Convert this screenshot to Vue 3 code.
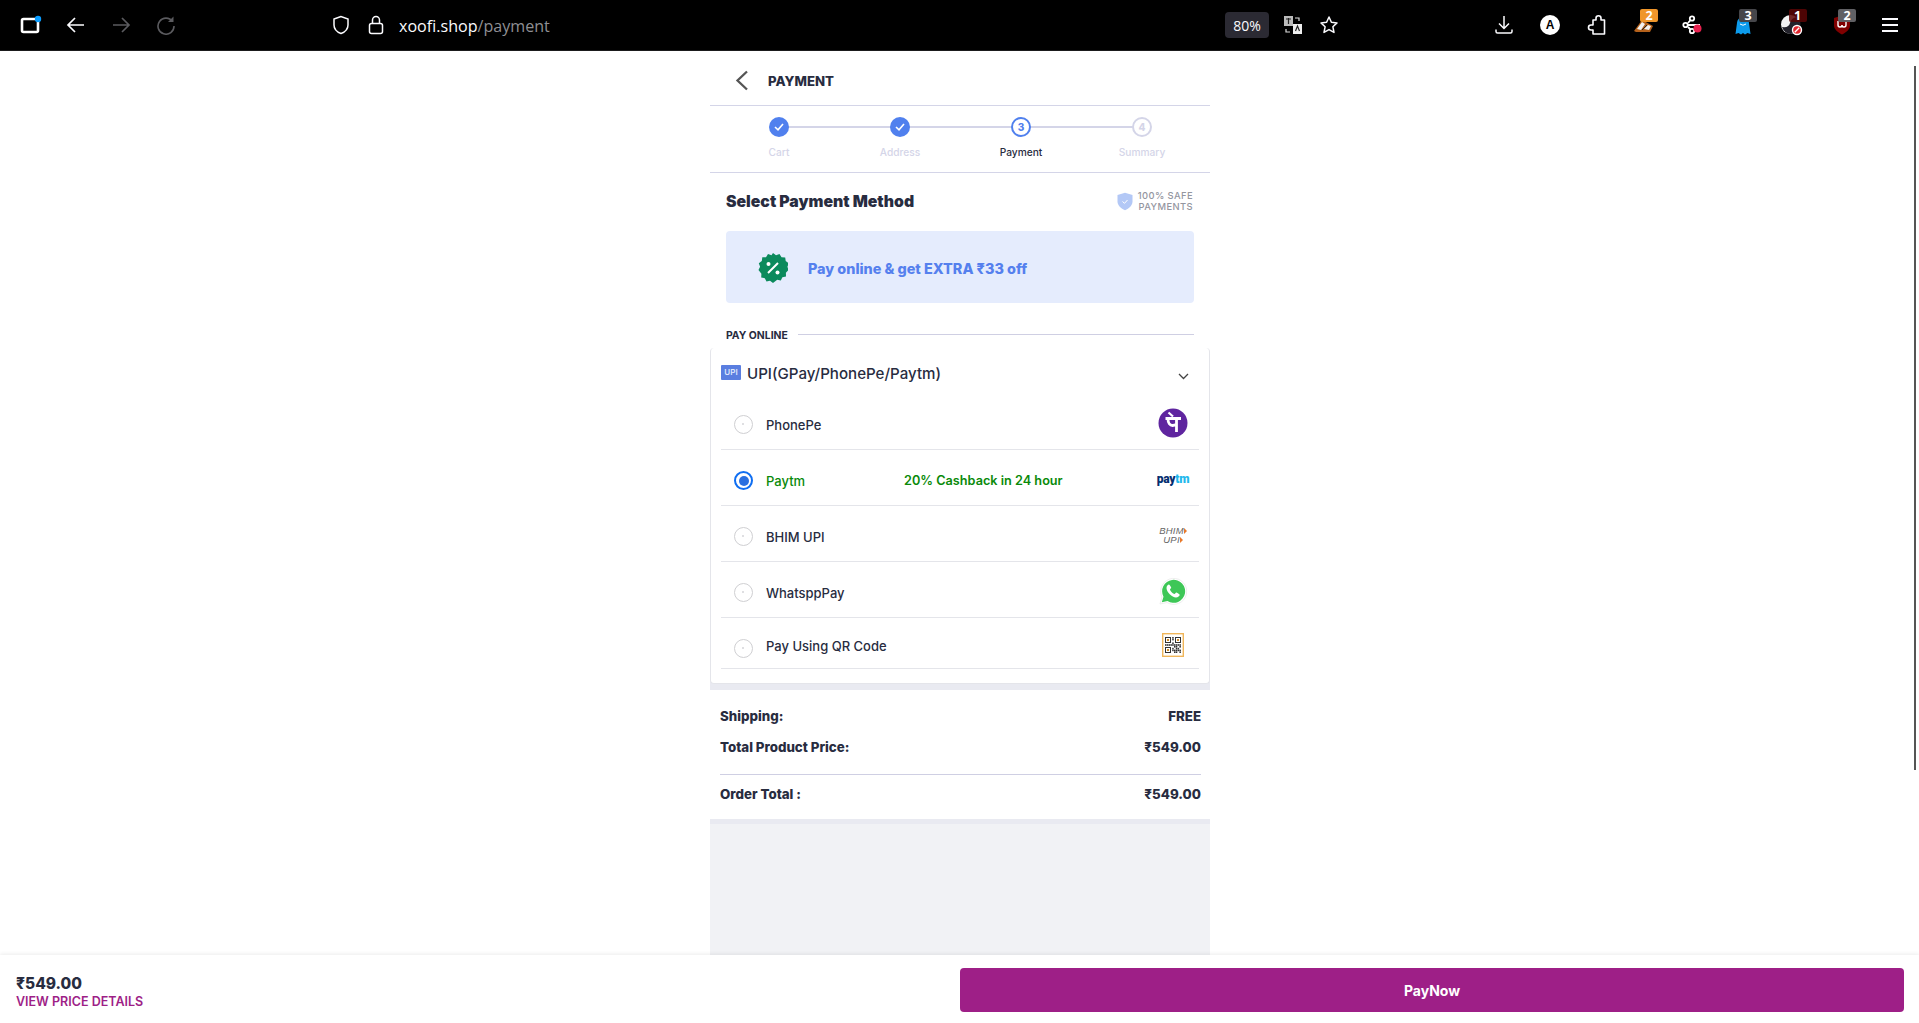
<script setup>
const steps = [
  { label: 'Cart', state: 'done' },
  { label: 'Address', state: 'done' },
  { label: 'Payment', state: 'current', n: 3 },
  { label: 'Summary', state: 'todo', n: 4 }
]
const methods = [
  { name: 'PhonePe', logo: 'phonepe' },
  { name: 'Paytm', logo: 'paytm', selected: true, note: '20% Cashback in 24 hour' },
  { name: 'BHIM UPI', logo: 'bhim' },
  { name: 'WhatsppPay', logo: 'whatsapp' },
  { name: 'Pay Using QR Code', logo: 'qr', short: true }
]
const finders = [[3, 4], [13, 4], [3, 14]]
const qrCells = []
for (let y = 0; y < 9; y++) for (let x = 0; x < 9; x++) {
  const inFinder = (x < 4 && y < 4) || (x > 4 && y < 4) || (x < 4 && y > 4)
  if (!inFinder && (x * 5 + y * 3 + x * y) % 3 !== 1) qrCells.push({ x, y })
}
</script>

<template>
  <div class="page">
    <header class="browser">
      <div class="nav">
        <span class="slot tabs">
          <svg width="22" height="20" viewBox="0 0 22 20"><rect x="2" y="4" width="16" height="13" rx="1.5" fill="none" stroke="#fff" stroke-width="2.6"/><circle cx="18" cy="4" r="3.2" fill="#0a9dff"/></svg>
        </span>
        <span class="slot"><svg width="20" height="18" viewBox="0 0 20 18" fill="none" stroke="#fbfbfe" stroke-width="1.7"><path d="M18 9H2M9 2 2 9l7 7"/></svg></span>
        <span class="slot"><svg width="20" height="18" viewBox="0 0 20 18" fill="none" stroke="#5b5b5f" stroke-width="1.7"><path d="M2 9h16M11 2l7 7-7 7"/></svg></span>
        <span class="slot"><svg width="20" height="20" viewBox="0 0 20 20" fill="none" stroke="#5b5b5f" stroke-width="1.6"><path d="M16.5 6.500A8 8 0 1 0 18 11"/><path d="M17.500 1.500v5.500H12" fill="#5b5b5f" stroke="none"/></svg></span>
      </div>
      <div class="address">
        <svg class="shield" width="18" height="20" viewBox="0 0 18 20" fill="none" stroke="#fbfbfe" stroke-width="1.5"><path d="M9 1.500 2 4v6c0 4 3 7 7 8.500 4-1.500 7-4.500 7-8.500V4z"/></svg>
        <svg class="lock" width="16" height="20" viewBox="0 0 16 20" fill="none" stroke="#fbfbfe" stroke-width="1.5"><rect x="1.500" y="8.500" width="13" height="10" rx="2"/><path d="M4.500 8.500V5a3.500 3.500 0 0 1 7 0v3.500"/></svg>
        <span class="url">xoofi.shop<span class="url-path">/payment</span></span>
      </div>
      <div class="page-actions">
        <span class="zoom-chip">80%</span>
        <span class="slot small">
          <svg width="20" height="20" viewBox="0 0 20 20"><rect x="1" y="1" width="9" height="10" fill="#bbb"/><rect x="10" y="9" width="9" height="10" fill="#eee"/><path d="M12 3h4v3M3 14v3h4" fill="none" stroke="#ddd" stroke-width="1.200"/><path d="M3 4h5M5.500 3v6M12.500 16l2-5 2 5" fill="none" stroke="#222" stroke-width="1.200"/></svg>
        </span>
        <span class="slot small">
          <svg width="20" height="20" viewBox="0 0 20 20" fill="none" stroke="#fbfbfe" stroke-width="1.500" stroke-linejoin="round"><path d="m10 2 2.400 5.200 5.600.7-4.100 3.900 1.100 5.600L10 14.600l-5 2.800 1.100-5.600L2 7.900l5.600-.7z"/></svg>
        </span>
      </div>
      <div class="tools">
        <span class="tool near"><svg width="20" height="20" viewBox="0 0 20 20" fill="none" stroke="#fbfbfe" stroke-width="1.500"><path d="M10 1v12M5 8.500l5 5 5-5M2 14.500v2a1.500 1.500 0 0 0 1.500 1.500h13a1.500 1.500 0 0 0 1.500-1.500v-2"/></svg></span>
        <span class="tool near"><span class="avatar">A</span></span>
        <span class="tool near"><svg width="19" height="20" viewBox="0 0 19 20" fill="none" stroke="#fbfbfe" stroke-width="1.600" stroke-linejoin="round"><path d="M6 5h3V3.300a2.500 2.500 0 0 1 5 0V5h3.500v14H6v-4H4a2.500 2.500 0 0 1 0-5h2z"/></svg></span>
        <span class="tool">
          <svg width="22" height="18" viewBox="0 0 22 18"><path d="M1 15 9 4l11 6-3 6H3z" fill="#b4611b"/><path d="M4 13l5-7 3 2-4 6zM11 13l4-4 3 1-2 4z" fill="#f2f2f2"/><path d="M9 14l5-5" stroke="#222" stroke-width="1"/></svg>
          <i class="badge orange">2</i>
        </span>
        <span class="tool">
          <svg width="22" height="20" viewBox="0 0 22 20" fill="none" stroke="#fff" stroke-width="1.800"><circle cx="10" cy="3.500" r="2.200"/><circle cx="3.500" cy="10" r="2.200"/><circle cx="10" cy="16" r="2.200"/><path d="M6 10h12M8.500 5 6 8M8.500 14.500 6 12"/><circle cx="15.500" cy="13.500" r="4" fill="#e8214f" stroke="none"/></svg>
        </span>
        <span class="tool">
          <svg width="16" height="20" viewBox="0 0 16 20"><path d="M2 8a6 6 0 0 1 12 0l1.500 11-3-1-2.500 1.500L8 18l-2 1.500L3.500 18l-3 1z" fill="#0c9bec"/><path d="M5 9q3 2.500 6 0" fill="none" stroke="#fff" stroke-width="1"/></svg>
          <i class="badge grey">3</i>
        </span>
        <span class="tool">
          <svg width="24" height="22" viewBox="0 0 24 22"><circle cx="10.500" cy="10.500" r="9.500" fill="#f2f2f2"/><path d="M2 13Q9 14 10 9t7-6q4 3 3.500 9-2 7-10 8-6 0-8.500-7z" fill="#23222b"/><circle cx="17" cy="16" r="5.200" fill="#fff"/><circle cx="17" cy="16" r="3.800" fill="#e0262d"/><path d="m14.800 18.200 4.400-4.400" stroke="#fff" stroke-width="1.300"/></svg>
          <i class="badge maroon">1</i>
        </span>
        <span class="tool">
          <svg width="18" height="20" viewBox="0 0 18 20"><path d="M9 .5 1 3v7.500c0 4 4 7 8 9 4-2 8-5 8-9V3z" fill="#800000"/><path d="M5 6v4a2 2 0 0 0 4 0 2 2 0 0 0 4 0V6" fill="none" stroke="#fff" stroke-width="1.400"/></svg>
          <i class="badge light">2</i>
        </span>
        <span class="tool menu"><span></span><span></span><span></span></span>
      </div>
    </header>

    <main class="viewport">
      <section class="column">
        <div class="title-bar">
          <svg width="14" height="22" viewBox="0 0 14 22" fill="none" stroke="#555" stroke-width="2.300"><path d="M12 1.500 2.500 10.500l9.500 9"/></svg>
          <h1>PAYMENT</h1>
        </div>

        <ol class="stepper">
          <li v-for="(s, i) in steps" :key="s.label" class="step" :class="s.state">
            <span class="dot">
              <svg v-if="s.state === 'done'" width="10" height="8" viewBox="0 0 10 8" fill="none" stroke="#fff" stroke-width="1.600"><path d="m1 4 3 2.800L9 1"/></svg>
              <template v-else>{{ s.n }}</template>
            </span>
            <span class="step-label">{{ s.label }}</span>
            <span v-if="i < steps.length - 1" class="connector"></span>
          </li>
        </ol>

        <div class="pay-section">
          <div class="method-head">
            <h2>Select Payment Method</h2>
            <div class="safe">
              <svg width="16" height="19" viewBox="0 0 16 19"><path d="M8 .8 .5 3v6.500c0 4 3.500 7 7.500 8.700 4-1.700 7.500-4.700 7.500-8.700V3z" fill="#b3c8f6"/><path d="m5.500 9.500 2 1.800 3-3.300" fill="none" stroke="#fff" stroke-width="1"/></svg>
              <span>100% SAFE<br />PAYMENTS</span>
            </div>
          </div>

          <div class="offer">
            <svg width="30" height="30" viewBox="0 0 30 30">
              <path fill="#0b8a5c" d="M15 0l3 2.200 3.500-1.100 2 3.100 3.700.2.500 3.700 3 2.200-1.300 3.500L30.500 17l-2.600 2.700.1 3.700-3.600.9-1.600 3.300-3.600-.8L15 30l-3-2.200-3.500.8-1.700-3.300-3.600-.9.200-3.700L.5 17l1.600-3.300L.8 10.200l3-2.200.5-3.700L8 4.200l2-3.100 3.500 1.100z"/>
              <path d="m10 20 10-10" stroke="#fff" stroke-width="2"/>
              <circle cx="10.500" cy="11" r="2" fill="#fff"/><circle cx="19.500" cy="19.500" r="2" fill="#fff"/>
            </svg>
            <span>Pay online &amp; get EXTRA ₹33 off</span>
          </div>

          <div class="section-label"><span>PAY ONLINE</span><i></i></div>

          <div class="card">
            <div class="card-head">
              <span class="upi-tag">UPI</span>
              <span class="upi-title">UPI(GPay/PhonePe/Paytm)</span>
              <svg class="chevron" width="11" height="7" viewBox="0 0 11 7" fill="none" stroke="#444" stroke-width="1.300"><path d="m1 1 4.500 4.500L10 1"/></svg>
            </div>
            <div v-for="m in methods" :key="m.name" class="method" :class="{ selected: m.selected, short: m.short }">
              <span class="radio"></span>
              <span class="method-name">{{ m.name }}</span>
              <span v-if="m.note" class="method-note">{{ m.note }}</span>
              <span class="logo">
                <svg v-if="m.logo === 'phonepe'" width="30" height="30" viewBox="0 0 30 30">
                  <circle cx="15" cy="15" r="14.500" fill="#5f259f"/>
                  <path d="M7.500 10.500h15.500M18.500 10.500V24M10 11c0 4 2 6.500 4.500 6.500 2 0 4-1.300 4-1.300" fill="none" stroke="#fff" stroke-width="2.800"/>
                  <path d="m10.500 4.500 4.500 4" stroke="#fff" stroke-width="2.200"/>
                </svg>
                <span v-else-if="m.logo === 'paytm'" class="paytm"><b>pay</b><em>tm</em></span>
                <span v-else-if="m.logo === 'bhim'" class="bhim"><span>BHIM<i></i></span><span>UPI<i></i></span></span>
                <svg v-else-if="m.logo === 'whatsapp'" width="28" height="28" viewBox="0 0 28 28">
                  <path d="M1 27l2-7A13 13 0 1 1 8 25.500z" fill="#fff" stroke="#eee"/>
                  <path d="M2.800 25.300l1.700-5.600A11.500 11.500 0 1 1 8.500 24z" fill="#3ec757"/>
                  <path d="M10 7.500c-1 0-2.500 1.500-2.500 3.500 0 4 5.500 9.500 9.500 9.500 2 0 3.700-1.500 3.700-2.700 0-.5-3-2.200-3.500-2.200s-1 1.400-1.700 1.400c-1.300 0-4.500-3-4.500-4.500 0-.7 1.200-1 1.200-1.700S10.600 7.500 10 7.500z" fill="#fff"/>
                </svg>
                <svg v-else width="22" height="24" viewBox="0 0 22 24" class="qr">
                  <rect x=".7" y=".7" width="20.600" height="22.600" fill="#fff" stroke="#f0b65a" stroke-width="1.400"/>
                  <g v-for="(f, i) in finders" :key="'f' + i">
                    <rect :x="f[0] + .5" :y="f[1] + .5" width="5" height="5" fill="none" stroke="#333" stroke-width="1"/>
                    <rect :x="f[0] + 2" :y="f[1] + 2" width="2" height="2" fill="#c98a2a"/>
                  </g>
                  <g fill="#333">
                    <rect v-for="(c, i) in qrCells" :key="i" :x="3 + c.x * 1.800" :y="4 + c.y * 1.800" width="1.500" height="1.600" />
                  </g>
                </svg>
              </span>
            </div>
          </div>
        </div>

        <div class="summary">
          <div class="sum-row"><span>Shipping:</span><span>FREE</span></div>
          <div class="sum-row"><span>Total Product Price:</span><span>₹549.00</span></div>
          <div class="sum-row total"><span>Order Total :</span><span>₹549.00</span></div>
        </div>
      </section>
      <span class="scroll-thumb"></span>
    </main>

    <footer class="paybar">
      <div class="pay-info">
        <strong>₹549.00</strong>
        <span>VIEW PRICE DETAILS</span>
      </div>
      <button class="pay-btn">PayNow</button>
    </footer>
  </div>
</template>

<style>
html, body { margin: 0; height: 100%; overflow: hidden; background: #fff; }
</style>

<style scoped>
* { box-sizing: border-box; }
.page {
  height: 1023px;
  display: flex;
  flex-direction: column;
  font-family: Inter, "Liberation Sans", sans-serif;
  color: #282c3f;
}
.browser {
  height: 51px;
  flex: none;
  background: #000;
  border-bottom: 1px solid #1b1b1d;
  display: flex;
  align-items: center;
  color: #fbfbfe;
  font-family: "Open Sans", "Liberation Sans", sans-serif;
}
.nav { display: flex; align-items: center; padding-left: 8px; width: 332px; flex: none; }
.slot { width: 45px; height: 32px; display: flex; align-items: center; justify-content: center; }
.slot.small { width: 36px; }
.address { display: flex; align-items: center; flex: none; width: 893px; }
.shield { margin-right: 18px; }
.lock { margin-right: 15px; }
.url { font-size: 16.100px; color: #fbfbfe; margin-top: 2px; }
.url-path { color: #8f8f93; }
.page-actions { display: flex; align-items: center; flex: none; width: 256px; }
.zoom-chip {
  width: 44px; height: 26px; background: #2b2a33; border-radius: 4px;
  font-size: 14px; display: flex; align-items: center; justify-content: center;
  margin-right: 6px;
}
.tools { display: flex; align-items: center; }
.tool {
  position: relative; width: 49.500px; height: 32px;
  display: flex; align-items: center; justify-content: center;
}
.tool.near { width: 46px; }
.avatar {
  width: 20px; height: 20px; border-radius: 50%; background: #fff; color: #000;
  font: 700 12px "Liberation Sans", sans-serif; display: flex; align-items: center; justify-content: center;
}
.badge {
  position: absolute; top: 0; left: 21px; width: 18px; height: 13px; border-radius: 2px;
  font-style: normal; font-weight: 700; font-size: 12.500px; line-height: 13px; text-align: center; color: #fff;
}
.badge.orange { background: #f0962a; }
.badge.grey { background: #46464a; }
.badge.light { background: #606064; }
.badge.maroon { background: rgba(90, 5, 5, .85); }
.menu { flex-direction: column; gap: 4px; width: 46px; }
.menu span { display: block; width: 16px; height: 2px; background: #fbfbfe; }

.viewport {
  flex: 1; min-height: 0; position: relative; overflow: hidden;
  display: flex; justify-content: center;
}
.scroll-thumb {
  position: absolute; right: 3px; top: 15px; width: 2px; height: 704px; background: #555;
}
.column {
  width: 500px; margin-left: 1px; background: #f1f2f5; display: flex; flex-direction: column;
}
.title-bar {
  height: 55px; background: #fff; display: flex; align-items: center; padding: 5px 0 0 25px;
  border-bottom: 1px solid #d4d5e8;
}
.title-bar h1 { margin: 0 0 0 19px; font-size: 13.200px; font-weight: 800; color: #282c3f; }
.stepper {
  list-style: none; margin: 0; padding: 0 7px 0 8px; height: 67px; background: #fff;
  display: grid; grid-template-columns: repeat(4, 121px); justify-content: center;
  border-bottom: 1px solid #d4d5e8;
}
.step { position: relative; display: flex; flex-direction: column; align-items: center; padding-top: 11px; }
.dot {
  width: 20px; height: 20px; border-radius: 50%; display: flex; align-items: center; justify-content: center;
  font-size: 10px; font-weight: 800; position: relative; z-index: 1; background: #fff;
}
.done .dot { background: #5080ee; }
.current .dot { border: 2px solid #5080ee; color: #5080ee; }
.todo .dot { border: 2px solid #d4d5e8; color: #d4d5e8; }
.step-label { margin-top: 9px; font-size: 10.200px; line-height: 13px; color: #d4d5e8; font-weight: 500; }
.current .step-label { color: #282c3f; }
.connector { position: absolute; top: 20px; left: 50%; width: 121px; height: 2px; background: #d4d5e8; }

.pay-section {
  background: linear-gradient(#fff calc(100% - 10px), #e9eaf1 0);
  padding-bottom: 6px;
}
.method-head {
  height: 58px; padding: 0 16px 2px; display: flex; align-items: center; justify-content: space-between;
}
.method-head h2 { margin: 0; font-size: 15.800px; font-weight: 900; color: #282c3f; }
.safe { display: flex; align-items: center; gap: 5px; font-size: 9.400px; line-height: 11.500px; color: #94969f; font-weight: 500; letter-spacing: .4px; text-align: right; margin-right: 1px; }
.offer {
  background: #e5ecfd; height: 72px; margin: 0 16px; border-radius: 4px; display: flex; align-items: center;
  padding: 2px 0 0 32px; gap: 20px; color: #5580ee; font-size: 14.400px; font-weight: 800;
}
.section-label {
  display: flex; align-items: center; gap: 10px; font-size: 10.400px; font-weight: 700; height: 13px; margin: 26px 16px 0; color: #282c3f;
}
.section-label i { flex: 1; height: 1px; background: #cfcfe3; margin-top: -2px; }
.card {
  background: #fff; border: 1px solid #e4e5ea; border-top: 0; border-radius: 4px; height: 336px; margin-top: 6px;
  padding: 0 10px;
}
.card-head { height: 46px; display: flex; align-items: center; padding-top: 4px; }
.upi-tag {
  width: 20px; height: 15px; background: #5a7ee0; color: #dfe6fa; font-size: 8px; font-weight: 600;
  display: flex; align-items: center; justify-content: center; border-radius: 1px; margin-top: -2px;
}
.upi-title { margin-left: 6px; font-size: 15.100px; font-weight: 500; color: #282c3f; }
.chevron { margin-left: auto; margin-right: 10px; margin-top: 6px; }
.method {
  height: 56px; display: flex; align-items: center; border-bottom: 1px solid #e4e5ea; padding: 6px 11px 0 13px; position: relative;
  font-size: 13px; font-weight: 500;
}
.method.short { height: 51px; }
.radio {
  width: 19px; height: 19px; border: 1.500px solid #cfcfd2; border-radius: 50%; flex: none; position: relative;
}
.radio::after {
  content: ""; position: absolute; left: 7px; top: 7px; width: 2px; height: 2px; border-radius: 50%; background: #d5d5d8;
}
.short .radio { margin-top: 4px; }
.selected .radio { border: 2px solid #0f6ef2; }
.selected .radio::after { left: 2.500px; top: 2.500px; width: 10px; height: 10px; background: #2a6fe0; }
.method-name { margin-left: 13px; }
.selected { color: #0a8a0a; }
.method-note { position: absolute; left: 183px; font-size: 12.700px; font-weight: 600; }
.logo { margin-left: auto; width: 30px; display: flex; justify-content: center; align-items: center; margin-top: -3px; }
.paytm { font-family: Roboto, "Liberation Sans", sans-serif; font-size: 12px; letter-spacing: -.2px; }
.paytm b { color: #042e6f; font-weight: 900; }
.paytm em { color: #22b8ec; font-style: normal; font-weight: 900; }
.bhim {
  display: flex; flex-direction: column; align-items: center; font-family: "Liberation Sans", sans-serif;
  font-size: 9.500px; line-height: 9px; font-style: italic; color: #666; font-weight: 400; letter-spacing: .2px;
}
.bhim i { display: inline-block; width: 0; height: 0; border-left: 3px solid #e8792b; border-top: 3px solid transparent; border-bottom: 3px solid transparent; }
.summary {
  background: #fff; padding: 10px 9px 0 10px; height: 134px; border-bottom: 5px solid #e9eaf1;
  font-size: 13.300px; font-weight: 800; color: #282c3f;
}
.sum-row { display: flex; justify-content: space-between; height: 31px; align-items: center; }
.sum-row.total { border-top: 1px solid #cfcfe3; margin-top: 12px; height: 39px; }

.paybar {
  height: 68px; flex: none; background: #fff; box-shadow: 0 -1px 4px rgba(0,0,0,.08); position: relative;
  display: flex; align-items: center; justify-content: space-between; padding: 2px 15px 0 16px;
}
.pay-info { display: flex; flex-direction: column; margin-top: 4px; }
.pay-info strong { font-size: 15.500px; font-weight: 800; line-height: 18px; }
.pay-info span { font-size: 12.500px; font-weight: 600; color: #9e1f87; line-height: 17px; }
.pay-btn {
  width: 944px; height: 44px; background: #9e1f87; color: #fff; border: 0; border-radius: 4px;
  font-family: inherit; font-size: 14px; font-weight: 700;
}
</style>
